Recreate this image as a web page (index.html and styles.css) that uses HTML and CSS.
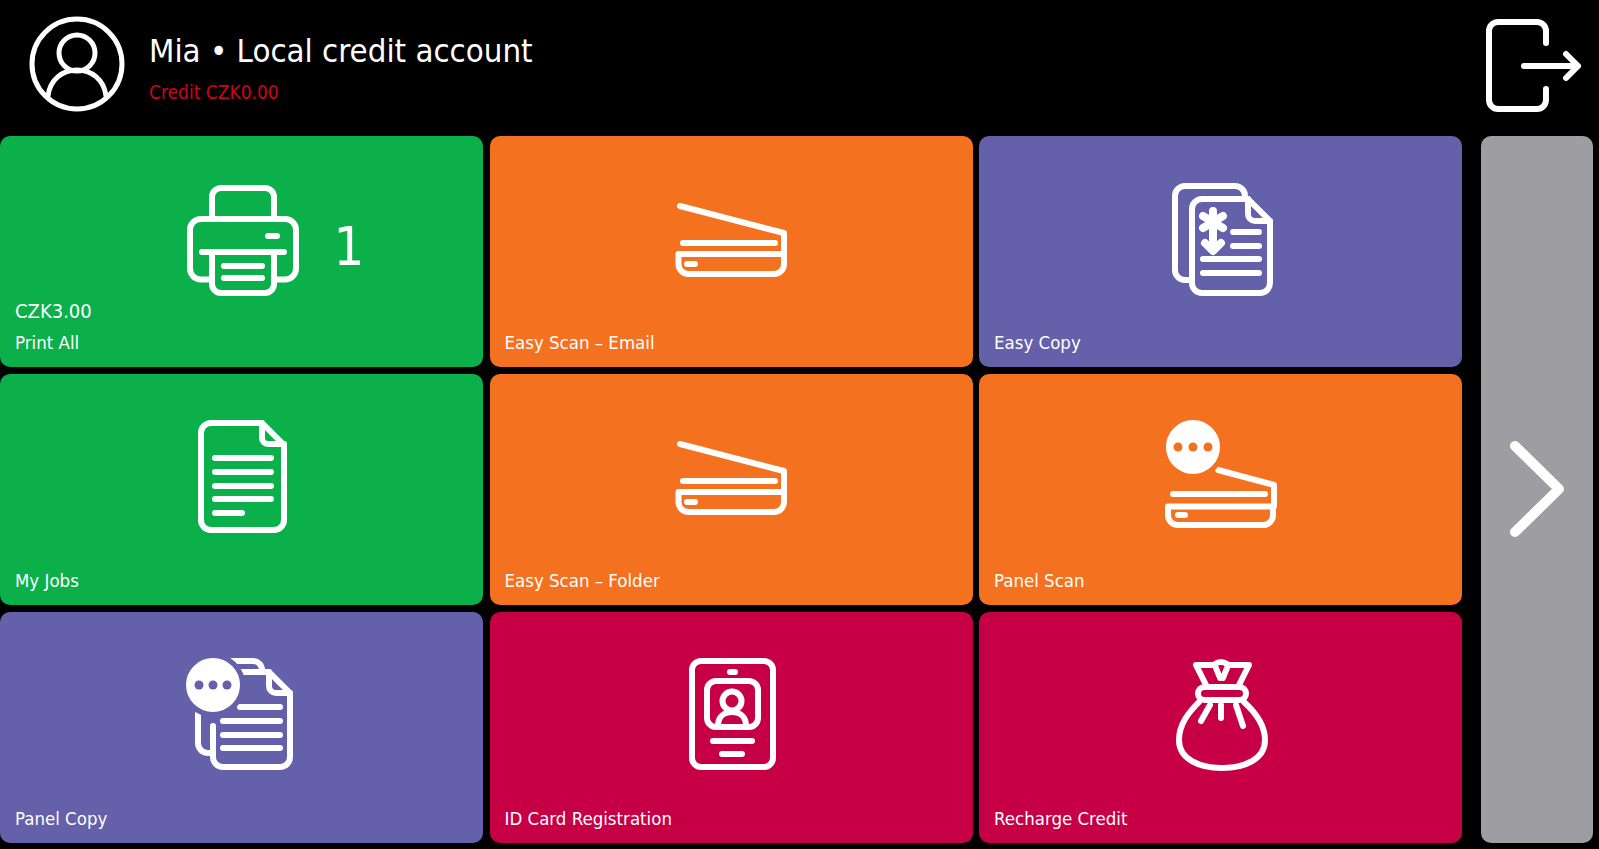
FILE: index.html
```html
<!DOCTYPE html>
<html lang="en">
<head>
    <meta charset="UTF-8">
    <meta name="viewport" content="width=device-width, initial-scale=1.0">
    <title>Home</title>
    <link rel="stylesheet" href="styles.css">
</head>
<body>
    <header class="top-bar">
        <svg class="user-icon" viewBox="0 0 96 96">
            <circle cx="48" cy="48" r="45"/>
            <circle cx="48" cy="37" r="18"/>
            <path d="M19 80 C21 63 34 54 48 54 C62 54 75 63 77 80"/>
        </svg>
        <div class="user-info">
            <div class="user-name">Mia • Local credit account</div>
            <div class="user-credit">Credit CZK0.00</div>
        </div>
        <svg class="logout-icon" viewBox="0 0 96 96">
            <path d="M60 26 V14 a9 9 0 0 0 -9 -9 H12 a9 9 0 0 0 -9 9 V83 a9 9 0 0 0 9 9 H51 a9 9 0 0 0 9 -9 V72"/>
            <path d="M38 49 H92 M80 37 L92 49 L80 61"/>
        </svg>
    </header>

    <main class="content">
        <div class="tiles">
            <a class="tile green">
                <span class="tile-icon">
                    <svg viewBox="0 4 120 110">
                        <path d="M30 38 V17 a9 9 0 0 1 9 -9 H83 a9 9 0 0 1 9 9 V38"/>
                        <path d="M30 99.5 H19 a11 11 0 0 1 -11 -11 V50 a11 11 0 0 1 11 -11 H103 a11 11 0 0 1 11 11 V88.5 a11 11 0 0 1 -11 11 H92"/>
                        <path d="M20 72 H102 M30 72 V104 a9 9 0 0 0 9 9 H83 a9 9 0 0 0 9 -9 V72"/>
                        <path d="M42 86 H80 M42 98 H80 M86 56 H95"/>
                    </svg>
                    <span class="tile-count">1</span>
                </span>
                <span class="tile-text">
                    <span class="tile-price">CZK3.00</span>
                    <span>Print All</span>
                </span>
            </a>
            <a class="tile orange">
                <span class="tile-icon">
                    <svg viewBox="0 4 120 110">
                        <path d="M9 26 L113 53 V74"/>
                        <path d="M12 63 H104 M16 84 H24"/>
                        <path d="M7.5 74 H113 V84 a10 10 0 0 1 -10 10 H17.5 a10 10 0 0 1 -10 -10 Z"/>
                    </svg>
                </span>
                <span class="tile-text"><span>Easy Scan – Email</span></span>
            </a>
            <a class="tile purple">
                <span class="tile-icon">
                    <svg viewBox="0 4 120 110">
                        <path d="M29 100 H24 a10 10 0 0 1 -10 -10 V16 a10 10 0 0 1 10 -10 H74 a10 10 0 0 1 10 10"/>
                        <path d="M41 19 H87 L109 41 V103 a10 10 0 0 1 -10 10 H41 a10 10 0 0 1 -10 -10 V29 a10 10 0 0 1 10 -10 Z"/>
                        <path d="M87 19 V34 a7 7 0 0 0 7 7 H109"/>
                        <path class="thick" d="M52 31 V70 M42 36 L62 48 M62 36 L42 48 M44 63 L52 71 L60 63"/>
                        <path d="M72 52 H98 M72 66 H98 M42 79 H98 M42 93 H98"/>
                    </svg>
                </span>
                <span class="tile-text"><span>Easy Copy</span></span>
            </a>

            <a class="tile green">
                <span class="tile-icon">
                    <svg viewBox="0 4 120 110">
                        <path d="M29 5 H80 L102 27 V102 a10 10 0 0 1 -10 10 H29 a10 10 0 0 1 -10 -10 V15 a10 10 0 0 1 10 -10 Z"/>
                        <path d="M80 5 V20 a6 6 0 0 0 6 6 H102"/>
                        <path d="M33 40 H89 M33 54 H89 M33 68 H89 M33 81 H89 M33 95 H60"/>
                    </svg>
                </span>
                <span class="tile-text"><span>My Jobs</span></span>
            </a>
            <a class="tile orange">
                <span class="tile-icon">
                    <svg viewBox="0 4 120 110">
                        <path d="M9 26 L113 53 V74"/>
                        <path d="M12 63 H104 M16 84 H24"/>
                        <path d="M7.5 74 H113 V84 a10 10 0 0 1 -10 10 H17.5 a10 10 0 0 1 -10 -10 Z"/>
                    </svg>
                </span>
                <span class="tile-text"><span>Easy Scan – Folder</span></span>
            </a>
            <a class="tile orange">
                <span class="tile-icon">
                    <svg viewBox="0 4 120 110">
                        <path d="M57 52 L113 67 V88"/>
                        <path d="M12 76 H104 M17 97 H24"/>
                        <path d="M7 88.5 H112 V97 a10 10 0 0 1 -10 10 H17 a10 10 0 0 1 -10 -10 Z"/>
                        <circle class="bubble" cx="32" cy="29" r="29.5"/>
                        <circle class="bubble-dot" cx="17" cy="29" r="4.5"/>
                        <circle class="bubble-dot" cx="32" cy="29" r="4.5"/>
                        <circle class="bubble-dot" cx="47" cy="29" r="4.5"/>
                    </svg>
                </span>
                <span class="tile-text"><span>Panel Scan</span></span>
            </a>

            <a class="tile purple">
                <span class="tile-icon">
                    <svg viewBox="0 4 120 110">
                        <path d="M50 5 H71 a9 9 0 0 1 9 9 M16 58 V87 a10 10 0 0 0 10 10 H31"/>
                        <path d="M55 16 H87 L108 37 V101 a10 10 0 0 1 -10 10 H41 a10 10 0 0 1 -10 -10 V70"/>
                        <path d="M87 16 V30 a7 7 0 0 0 7 7 H108"/>
                        <path d="M58 51 H98 M41 65 H98 M41 79 H98 M41 92 H98"/>
                        <circle class="bubble" cx="31" cy="29" r="29.5"/>
                        <circle class="bubble-dot" cx="17" cy="29" r="4.5"/>
                        <circle class="bubble-dot" cx="31" cy="29" r="4.5"/>
                        <circle class="bubble-dot" cx="45" cy="29" r="4.5"/>
                    </svg>
                </span>
                <span class="tile-text"><span>Panel Copy</span></span>
            </a>
            <a class="tile crimson">
                <span class="tile-icon">
                    <svg viewBox="0 4 120 110">
                        <rect x="21" y="5" width="81" height="106" rx="9"/>
                        <rect x="36" y="25" width="51" height="46" rx="9"/>
                        <circle cx="61" cy="45" r="9.5"/>
                        <path d="M47 70 C47 60 54 56 61 56 C68 56 75 60 75 70"/>
                        <path d="M59 16 H64 M42 85 H81 M51 98 H71"/>
                    </svg>
                </span>
                <span class="tile-text"><span>ID Card Registration</span></span>
            </a>
            <a class="tile crimson">
                <span class="tile-icon">
                    <svg viewBox="0 4 120 110">
                        <path d="M45 29 L35 9 H52 C54 9 55 6 60 6 C65 6 66 9 68 9 H88 L78 29"/>
                        <path d="M55 12 L59 22 M66 12 L62 22"/>
                        <rect x="37" y="31" width="48" height="13" rx="6.5"/>
                        <path d="M38 46 C28 56 18 68 18 84 C18 103 38 112 61 112 C84 112 104 103 104 84 C104 68 94 56 83 46"/>
                        <path d="M40 65 L49 49 M60 62 V49 M82 70 L75 49"/>
                    </svg>
                </span>
                <span class="tile-text"><span>Recharge Credit</span></span>
            </a>
        </div>

        <a class="next-page">
            <svg viewBox="0 0 60 100">
                <path d="M6 6 L50 49 L6 92"/>
            </svg>
        </a>
    </main>
</body>
</html>
```

FILE: styles.css
```css
body {
    margin: 0;
    height: 849px;
    overflow: hidden;
    background: #000;
    color: #fff;
    font-family: "DejaVu Sans", sans-serif;
    font-stretch: condensed;
}
svg {
    fill: none;
    stroke: #fff;
    stroke-width: 6;
    stroke-linecap: round;
    stroke-linejoin: round;
    display: block;
    overflow: visible;
}

.top-bar {
    height: 136px;
    display: flex;
    align-items: center;
    padding: 0 17px 0 29px;
    box-sizing: border-box;
}
.user-icon {
    width: 96px;
    height: 96px;
    margin-bottom: 8px;
    stroke-width: 5;
}
.user-info {
    margin-left: 24px;
    flex: 1;
}
.user-name {
    font-size: 32.7px;
    line-height: 40px;
}
.user-credit {
    font-size: 19px;
    line-height: 26px;
    margin-top: 8px;
    color: #d0021b;
}
.logout-icon {
    width: 96px;
    height: 96px;
    margin-bottom: 7px;
}

.content {
    display: flex;
}
.tiles {
    display: grid;
    grid-template-columns: repeat(3, 483px);
    grid-auto-rows: 231px;
    column-gap: 6.5px;
    row-gap: 7px;
}
.tile {
    display: flex;
    flex-direction: column;
    border-radius: 10px;
}
.green { background: #0bb04b; --tile: #0bb04b; }
.orange { background: #f47120; --tile: #f47120; }
.purple { background: #6460a9; --tile: #6460a9; }
.crimson { background: #c70046; --tile: #c70046; }

.tile-icon {
    position: relative;
    width: 120px;
    height: 110px;
    margin: 48px auto 0;
}
.tile-icon svg {
    width: 120px;
    height: 110px;
}
.tile-icon svg .thick {
    stroke-width: 8;
}
.tile-count {
    position: absolute;
    left: 152px;
    top: 28px;
    font-size: 54px;
    line-height: 70px;
}
.tile-text {
    margin-top: auto;
    padding: 0 15px 9px;
    font-size: 18.5px;
    line-height: 31px;
    display: flex;
    flex-direction: column;
}
.tile-price {
    font-size: 20px;
}
.bubble {
    fill: #fff;
    stroke: var(--tile);
    stroke-width: 5;
}
.bubble-dot {
    fill: var(--tile);
    stroke: none;
}

.next-page {
    width: 112px;
    height: 707px;
    margin-left: 19px;
    border-radius: 10px;
    background: #9e9ea2;
    display: flex;
    align-items: center;
    justify-content: center;
}
.next-page svg {
    width: 60px;
    height: 100px;
    stroke-width: 10;
    margin-left: 3px;
}
```
